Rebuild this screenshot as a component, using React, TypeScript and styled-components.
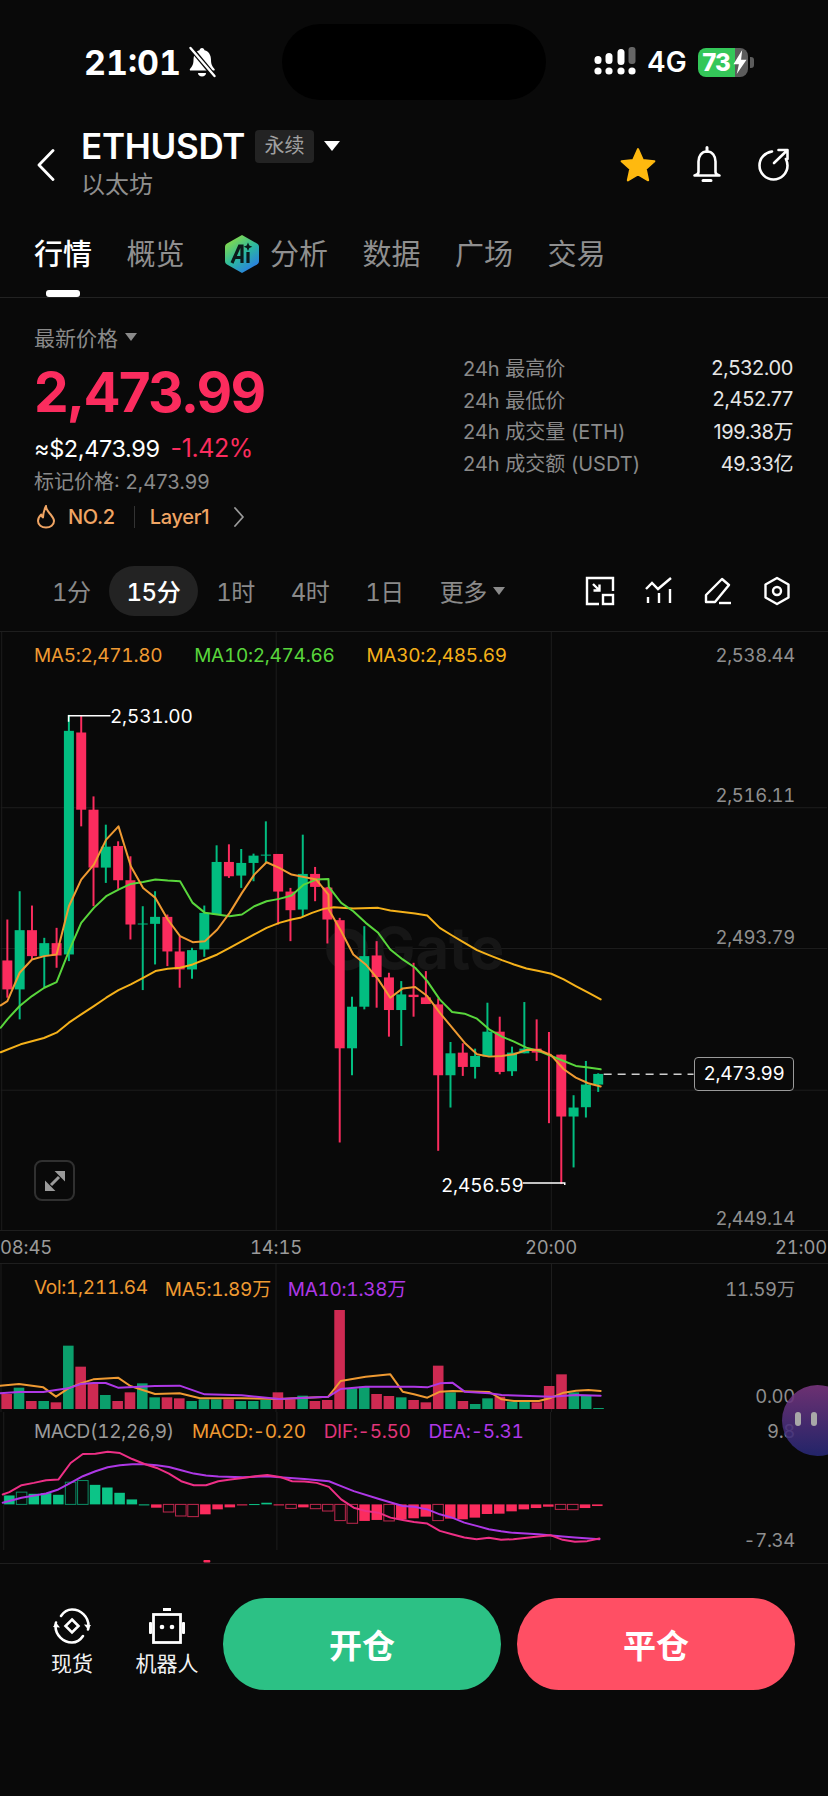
import styled, { createGlobalStyle } from "styled-components";

const GlobalStyle = createGlobalStyle`
  html, body {
    margin: 0;
    padding: 0;
    background: #090909;
  }
  * {
    box-sizing: border-box;
  }
`;

type Pt = [number, number];

const RED = "#fb2c5e";
const GREEN = "#02bd80";
const ORANGE = "#ef9a32";
const LIME = "#59d63c";
const YELLOW = "#f5b11a";
const PURPLE = "#ae38e6";
const PINK = "#ee2f86";

// values read off the reference crops: [index, up, wickTop, bodyTop, bodyBottom, wickBottom]
const candlesA: [number, number, number, number, number, number][] = [
  [0, 0, 840, 963, 1050, 1075],
  [1, 1, 755, 872, 1050, 1140],
  [2, 0, 798, 872, 950, 960],
  [3, 1, 895, 911, 950, 1045],
  [4, 0, 865, 911, 948, 985],
  [5, 1, 225, 273, 945, 965],
  [6, 0, 228, 278, 510, 560],
  [7, 0, 470, 510, 684, 800],
  [8, 1, 555, 621, 684, 730],
  [9, 0, 605, 619, 722, 748],
  [10, 0, 650, 722, 855, 900],
  [11, 1, 800, 852, 855, 1052],
  [12, 1, 755, 832, 853, 975],
  [13, 0, 825, 832, 936, 980],
  [14, 0, 890, 936, 990, 1045],
  [15, 1, 925, 932, 990, 1018],
  [16, 1, 798, 820, 930, 952],
  [17, 1, 617, 667, 825, 825],
  [18, 0, 614, 667, 710, 715],
  [19, 1, 628, 670, 708, 745],
  [20, 1, 642, 648, 670, 725],
  [21, 1, 545, 645, 648, 670],
  [22, 0, 643, 643, 756, 855],
  [23, 0, 745, 756, 812, 905],
  [24, 1, 585, 703, 810, 830],
  [25, 0, 682, 703, 742, 785],
  [26, 0, 742, 744, 840, 912],
];

const candlesB: [number, number, number, number, number, number][] = [
  [27, 0, 355, 362, 747, 1030],
  [28, 1, 592, 622, 747, 828],
  [29, 1, 380, 470, 622, 630],
  [30, 0, 425, 468, 533, 625],
  [31, 0, 520, 534, 632, 712],
  [32, 1, 545, 585, 632, 740],
  [33, 0, 490, 586, 593, 652],
  [34, 0, 515, 594, 614, 614],
  [35, 0, 597, 615, 828, 1055],
  [36, 1, 728, 762, 828, 925],
  [37, 0, 732, 760, 803, 830],
  [38, 1, 748, 770, 803, 838],
  [39, 1, 610, 697, 772, 772],
  [40, 0, 652, 697, 818, 825],
  [41, 1, 742, 760, 816, 830],
  [42, 1, 608, 748, 762, 762],
  [43, 0, 660, 748, 760, 785],
  [44, 0, 698, 772, 772, 972],
  [45, 0, 766, 766, 952, 1155],
  [46, 1, 888, 925, 952, 1105],
  [47, 1, 785, 856, 924, 955],
  [48, 1, 822, 824, 856, 878],
];

const candleX = (i: number) => 6.67 + 12.33 * i;

const candles = [
  ...candlesA.map(([i, up, a, b, c, d]) => ({
    i, up,
    wt: 640 + a / 3, bt: 640 + b / 3, bb: 640 + c / 3, wb: 640 + d / 3,
  })),
  ...candlesB.map(([i, up, a, b, c, d]) => ({
    i, up,
    wt: 800 + a / 3, bt: 800 + b / 3, bb: 800 + c / 3, wb: 800 + d / 3,
  })),
];

const fromA = (p: Pt[]) => p.map(([x, y]) => `${x / 3},${640 + y / 3}`);
const fromB = (p: Pt[]) => p.map(([x, y]) => `${300 + x / 2.97},${800 + y / 3}`);
const lowerL = (p: Pt[]) => p.map(([x, y]) => `${x / 3},${1220 + y / 3}`);
const lowerR = (p: Pt[]) => p.map(([x, y]) => `${414 + x / 3},${1220 + y / 3}`);

const ma5 = [
  ...fromA([[0,1098],[20,1085],[57,1000],[94,960],[131,950],[168,945],[205,800],[242,720],[280,675],[317,600],[354,560],[391,680],[428,745],[465,775],[502,840],[539,890],[577,908],[614,905],[651,870],[688,820],[725,760],[762,705],[799,668],[837,685],[874,705],[911,712],[948,720],[985,765]]),
  ...fromB([[85,330],[122,395],[158,465],[195,495],[232,540],[268,595],[305,567],[342,563],[378,590],[415,640],[452,685],[489,730],[526,765],[562,772],[600,770],[636,765],[673,752],[710,752],[747,768],[784,810],[820,835],[857,852],[894,862]]),
].join(" ");

const ma10 = [
  ...fromA([[0,1165],[20,1140],[57,1100],[94,1070],[131,1045],[168,1028],[205,935],[242,850],[280,805],[317,770],[354,750],[391,733],[428,727],[465,720],[502,723],[539,725],[577,790],[614,820],[651,825],[688,830],[725,825],[762,800],[799,785],[837,778],[874,768],[911,735],[948,720],[985,718]]),
  ...fromB([[85,262],[122,310],[158,335],[195,370],[232,400],[268,450],[305,480],[342,505],[378,545],[415,600],[452,638],[489,643],[526,658],[562,690],[600,712],[636,727],[673,745],[710,755],[747,770],[784,785],[820,800],[857,805],[894,810]]),
].join(" ");

const ma30 = [
  "0,1053", "20,1045",
  ...fromA([[130,1196],[168,1180],[205,1150],[242,1125],[280,1100],[317,1075],[354,1052],[391,1035],[428,1015],[465,995],[502,988],[539,985],[577,975],[614,960],[651,945],[688,925],[725,905],[762,885],[799,865],[837,850],[874,840]]),
  ...fromB([[0,355],[35,340],[70,328],[100,323],[158,327],[232,325],[268,333],[342,342],[378,348],[415,385],[452,408],[489,430],[526,452],[562,467],[600,482],[636,495],[673,507],[710,515],[747,523],[784,540],[820,560],[857,580],[894,600]]),
].join(" ");

// [top, up]
const volumes: [number, number][] = [
  [522,0],[503,1],[543,0],[543,1],[547,0],[377,1],[440,0],[490,0],[525,1],[543,0],
  [517,0],[490,1],[532,1],[532,0],[535,0],[543,1],[538,1],[538,1],[538,0],[543,1],
  [543,1],[540,1],[517,0],[538,0],[527,1],[543,0],[540,0],[270,0],[505,1],[500,1],
  [522,0],[528,0],[532,1],[540,0],[547,0],[437,0],[517,1],[543,0],[552,1],[535,1],
  [530,0],[545,1],[545,1],[547,0],[498,0],[463,0],[517,1],[528,1],[564,1],
];

const volMa5 = [
  ...lowerL([[0,497],[57,492],[130,502],[168,530],[205,505],[242,490],[280,478],[354,473],[391,498],[428,510],[465,522],[539,520],[600,535],[725,535],[837,537],[985,530],[1022,483],[1097,470],[1171,463],[1208,515]]),
  ...lowerR([[0,523],[40,533],[78,515],[115,513],[226,516],[263,538],[300,543],[375,543],[412,533],[449,518],[486,512],[523,510],[560,513]]),
].join(" ");

const volMa10 = [
  ...lowerL([[0,520],[57,516],[130,516],[168,510],[205,505],[242,492],[280,489],[317,489],[354,503],[465,498],[539,497],[614,523],[725,526],[837,537],[985,530],[1022,507],[1097,500]]),
  ...lowerR([[0,500],[40,502],[78,490],[115,488],[152,515],[226,520],[263,525],[412,530],[486,525],[560,527]]),
].join(" ");

// [end, up, hollow]
const macdBars: [number, number, number][] = [
  [828,1,0],[818,1,1],[823,1,0],[821,1,0],[826,1,0],[788,1,1],[783,1,1],[796,1,0],[804,1,0],[820,1,0],
  [840,1,0],[855,1,0],[865,0,0],[878,0,1],[890,0,1],[892,0,1],[885,0,0],[870,0,0],[864,0,0],[858,0,0],
  [854,1,0],[850,1,0],[858,0,0],[867,0,1],[864,0,0],[868,0,1],[875,0,1],[904,0,1],[912,0,1],[905,0,0],
  [902,0,0],[905,0,1],[900,0,0],[897,0,0],[892,0,0],[904,0,1],[898,0,0],[900,0,0],[895,0,0],[884,0,0],
  [883,0,0],[876,0,0],[870,0,0],[866,0,0],[862,0,0],[870,0,1],[871,0,1],[866,0,0],[860,0,0],
];

const dif = [
  ...lowerL([[0,825],[20,818],[57,797],[94,790],[131,782],[168,780],[205,730],[242,703],[280,702],[317,696],[354,700],[391,718],[428,733],[465,745],[502,762],[539,785],[577,797],[614,797],[651,785],[688,780],[725,775],[762,770],[799,766],[837,772],[874,785],[911,786],[948,790],[985,802],[1022,840],[1060,865],[1097,875],[1134,880],[1171,895],[1208,902]]),
  ...lowerR([[0,908],[40,913],[78,935],[115,945],[152,955],[189,960],[226,956],[263,962],[300,960],[375,952],[412,948],[449,962],[486,968],[523,966],[560,958]]),
].join(" ");

const dea = [
  ...lowerL([[0,850],[57,835],[131,822],[168,810],[205,790],[242,770],[280,755],[317,743],[354,737],[391,734],[428,734],[465,737],[502,742],[539,752],[577,762],[614,768],[651,771],[725,773],[799,770],[837,773],[911,778],[985,785],[1022,800],[1060,815],[1134,838],[1208,860]]),
  ...lowerR([[0,862],[40,870],[78,885],[115,895],[152,910],[189,920],[226,930],[263,936],[300,941],[375,945],[449,952],[486,955],[560,960]]),
].join(" ");

const stats = [
  { label: "24h 最高价", value: "2,532.00" },
  { label: "24h 最低价", value: "2,452.77" },
  { label: "24h 成交量 (ETH)", value: "199.38万" },
  { label: "24h 成交额 (USDT)", value: "49.33亿" },
];

const intervals = ["1分", "15分", "1时", "4时", "1日"];

const BellOffIcon = () => (
  <svg width="32" height="32" viewBox="0 0 32 32">
    <path d="M16 2c1.500 0 2.300 1 2.500 2.300 4.500 1.200 6.500 5 6.500 9.700 0 4.500 1.500 6.500 3.500 9 .6.800.2 1.500-.8 1.500H4.800c-1 0-1.400-.7-.8-1.500 2-2.500 3.500-4.500 3.500-9 0-4.700 2-8.500 6-9.700.2-1.300 1-2.300 2.500-2.300z" fill="#fff" />
    <path d="M12 27h8c0 2-1.800 3.500-4 3.500s-4-1.500-4-3.500z" fill="#fff" />
    <path d="M4 1l25 30" stroke="#090909" strokeWidth="5" />
    <path d="M4.500 2l24 28" stroke="#fff" strokeWidth="2.400" strokeLinecap="round" />
  </svg>
);

const SignalIcon = () => (
  <svg width="44" height="30" viewBox="0 0 44 30">
    <circle cx="5" cy="24" r="3.600" fill="#fff" />
    <circle cx="16" cy="24" r="3.600" fill="#fff" />
    <circle cx="28" cy="24" r="3.600" fill="#fff" />
    <circle cx="39" cy="24" r="3.600" fill="#fff" />
    <rect x="1.500" y="9" width="7" height="8" rx="3.500" fill="#fff" />
    <rect x="12.500" y="6" width="7" height="11" rx="3.500" fill="#fff" />
    <rect x="24.500" y="2" width="7" height="16" rx="3.500" fill="#fff" />
    <rect x="35.500" y="0" width="7" height="17" rx="3" fill="#666" />
  </svg>
);

const BackIcon = () => (
  <svg width="20" height="32" viewBox="0 0 20 32">
    <path d="M17 1.500 3 16l14 14.500" fill="none" stroke="#fff" strokeWidth="2.800" strokeLinecap="round" strokeLinejoin="round" />
  </svg>
);

const StarIcon = () => (
  <svg width="38" height="38" viewBox="0 0 36 36">
    <path d="M18 3l4.500 10.200 11 1.200-8.200 7.300 2.300 10.800L18 26.900 8.400 32.500l2.300-10.800-8.200-7.300 11-1.200z" fill="#ffb90f" stroke="#ffb90f" strokeWidth="2" strokeLinejoin="round" />
  </svg>
);

const BellIcon = () => (
  <svg width="32" height="38" viewBox="0 0 32 38">
    <path d="M16 5.500c-5.500 0-8.500 4.500-8.500 10V26c0 1.500-1.500 3-4 3.500h25c-2.500-.5-4-2-4-3.500V15.500c0-5.500-3-10-8.500-10z" fill="none" stroke="#fff" strokeWidth="2.600" strokeLinejoin="round" />
    <path d="M16 1.500v4M12 34.500h8" stroke="#fff" strokeWidth="3" strokeLinecap="round" />
  </svg>
);

const ShareIcon = () => (
  <svg width="34" height="34" viewBox="0 0 34 34">
    <path d="M15 3.500C8 4.500 2.500 10 2.500 17.500c0 7.700 6.300 14 14 14s14-6.300 14-14c0-2.500-.6-4.500-1.600-6.500" fill="none" stroke="#fff" strokeWidth="2.600" strokeLinecap="round" />
    <path d="M17 15 30 2.500M21.500 2h9v9" fill="none" stroke="#fff" strokeWidth="2.600" strokeLinecap="round" strokeLinejoin="round" />
  </svg>
);

const AiIcon = () => (
  <svg width="36" height="40" viewBox="0 0 36 40">
    <defs>
      <linearGradient id="aiHex" x1="0.150" y1="0.100" x2="0.750" y2="1">
        <stop offset="0" stopColor="#86d94a" />
        <stop offset="0.500" stopColor="#2bb9a0" />
        <stop offset="1" stopColor="#2a78ea" />
      </linearGradient>
    </defs>
    <path d="M18 1l15 8.500c1.500.9 2 2 2 3.500v14c0 1.500-.5 2.600-2 3.500L18 39 3 30.500c-1.500-.9-2-2-2-3.500V13c0-1.500.5-2.600 2-3.500z" fill="url(#aiHex)" />
    <path d="M8 29l7.500-17h2.500v17M11.500 23.500H18M24 18v11" fill="none" stroke="#0b1a1a" strokeWidth="3.200" />
    <path d="M24 8.500l1.300 3 3 1.300-3 1.300-1.300 3-1.300-3-3-1.300 3-1.300z" fill="#0b1a1a" />
  </svg>
);

const FlameIcon = () => (
  <svg width="20" height="24" viewBox="0 0 20 24">
    <path d="M10 1.500c.5 4 2.500 5.500 5 8.500 1.800 2.200 3 4 3 6 0 3.900-3.600 6.500-8 6.500s-8-2.600-8-6.500c0-3 1.600-5 3.200-6.500.3 1.500.9 2.400 1.800 3 .2-4 1.300-8 3-11.500z" fill="none" stroke="#f0a564" strokeWidth="2" strokeLinejoin="round" />
  </svg>
);

const SmallChevron = () => (
  <svg width="12" height="22" viewBox="0 0 12 22">
    <path d="M2 2l8 9-8 9" fill="none" stroke="#9a9a9a" strokeWidth="1.800" strokeLinecap="round" strokeLinejoin="round" />
  </svg>
);

const LayoutIcon = () => (
  <svg width="30" height="30" viewBox="0 0 30 30" fill="none" stroke="#fff" strokeWidth="2.400">
    <path d="M28 15V2H2v26h12" />
    <rect x="18" y="19" width="10" height="9" />
    <path d="M8 8l6 6M14.500 8.500v6h-6" />
  </svg>
);

const IndicatorIcon = () => (
  <svg width="30" height="30" viewBox="0 0 30 30" fill="none" stroke="#fff" strokeWidth="2.400">
    <path d="M2 13l6-6 6 6L27 2" />
    <path d="M4 27v-6M15 27V17M26 27V13" />
  </svg>
);

const PenIcon = () => (
  <svg width="30" height="30" viewBox="0 0 30 30" fill="none" stroke="#fff" strokeWidth="2.400" strokeLinejoin="round">
    <path d="M19 3l7 6-14 17H3v-7z" />
    <path d="M16 27h12" />
  </svg>
);

const HexIcon = () => (
  <svg width="30" height="30" viewBox="0 0 30 30" fill="none" stroke="#fff" strokeWidth="2.400" strokeLinejoin="round">
    <path d="M15 2l11.500 6.500v13L15 28 3.500 21.500v-13z" />
    <circle cx="15" cy="15" r="4" />
  </svg>
);

const ExpandIcon = () => (
  <svg width="24" height="24" viewBox="0 0 24 24" fill="#9a9a9a" stroke="#9a9a9a" strokeWidth="2">
    <path d="M14 3h7v7zM3 21v-7l7 7z" />
    <path d="M16 8l-8 8" strokeWidth="3" />
  </svg>
);

const SpotIcon = () => (
  <svg width="38" height="38" viewBox="0 0 38 38" fill="none" stroke="#fff" strokeWidth="2.600">
    <path d="M8 9C11 4.500 15 2.500 19 2.500c9 0 16.500 7.500 16.500 16.500 0 1.500-.2 2.500-.5 3.500M30 29c-3 4.500-7 6.500-11 6.500C10 35.500 2.500 28 2.500 19c0-1.500.2-2.500.5-3.500" strokeLinecap="round" />
    <path d="M31 17.500l4 5 3-4.500zM7 20.500l-4-5-3 4.500z" fill="#fff" stroke="none" />
    <path d="M19 12.500l6.500 6.500-6.500 6.500-6.500-6.500z" />
  </svg>
);

const RobotIcon = () => (
  <svg width="38" height="38" viewBox="0 0 38 38" fill="none">
    <rect x="15" y="1" width="8" height="3" fill="#fff" />
    <rect x="5.500" y="7.500" width="27" height="28" stroke="#fff" strokeWidth="2.800" />
    <rect x="1" y="15" width="3" height="12" rx="1" fill="#fff" />
    <rect x="34" y="15" width="3" height="12" rx="1" fill="#fff" />
    <circle cx="14" cy="20" r="2.300" fill="#fff" />
    <circle cx="24" cy="20" r="2.300" fill="#fff" />
  </svg>
);

export default function App() {
  return (
    <Page>
      <GlobalStyle />
      <StatusBar>
        <StatusLeft>
          <Clock>21:01</Clock>
          <BellOffIcon />
        </StatusLeft>
        <Island />
        <StatusRight>
          <SignalIcon />
          <Network>4G</Network>
          <Battery>
            <BatteryLevel>73</BatteryLevel>
            <BatteryRest>
              <svg width="16" height="24" viewBox="0 0 14 22">
                <path d="M9 0 1 13h5l-2 9 9-13H8z" fill="#fff" />
              </svg>
            </BatteryRest>
          </Battery>
          <BatteryNub />
        </StatusRight>
      </StatusBar>

      <NavRow>
        <BackButton>
          <BackIcon />
        </BackButton>
        <TitleBlock>
          <TitleLine>
            <Symbol>ETHUSDT</Symbol>
            <Tag>永续</Tag>
            <Caret $size={8} $color="#fff" />
          </TitleLine>
          <Subtitle>以太坊</Subtitle>
        </TitleBlock>
        <NavActions>
          <StarIcon />
          <BellIcon />
          <ShareIcon />
        </NavActions>
      </NavRow>

      <Tabs>
        <Tab $active>行情</Tab>
        <Tab>概览</Tab>
        <Tab>
          <AiIcon />
          分析
        </Tab>
        <Tab>数据</Tab>
        <Tab>广场</Tab>
        <Tab>交易</Tab>
      </Tabs>

      <Summary>
        <PriceColumn>
          <PriceKind>
            最新价格
            <Caret $size={6} $color="#8a8a8a" />
          </PriceKind>
          <LastPrice>2,473.99</LastPrice>
          <Converted>
            ≈$2,473.99<Change>-1.42%</Change>
          </Converted>
          <MarkPrice>标记价格: 2,473.99</MarkPrice>
          <Badges>
            <FlameIcon />
            <BadgeText>NO.2</BadgeText>
            <BadgeDivider />
            <BadgeText>Layer1</BadgeText>
            <SmallChevron />
          </Badges>
        </PriceColumn>
        <StatsColumn>
          {stats.map((s) => (
            <StatRow key={s.label}>
              <StatLabel>{s.label}</StatLabel>
              <StatValue>{s.value}</StatValue>
            </StatRow>
          ))}
        </StatsColumn>
      </Summary>

      <Toolbar>
        {intervals.map((t) => (
          <Interval key={t} $active={t === "15分"}>
            {t}
          </Interval>
        ))}
        <Interval>
          更多
          <Caret $size={6} $color="#8a8a8a" />
        </Interval>
        <ToolIcons>
          <LayoutIcon />
          <IndicatorIcon />
          <PenIcon />
          <HexIcon />
        </ToolIcons>
      </Toolbar>

      <PricePanel>
        <PlotSvg viewBox="0 632 828 599">
          <GridLine x1="0" x2="828" y1="808" y2="808" />
          <GridLine x1="0" x2="828" y1="949" y2="949" />
          <GridLine x1="0" x2="828" y1="1091" y2="1091" />
          <GridLine x1="1" x2="1" y1="632" y2="1231" />
          <GridLine x1="276" x2="276" y1="632" y2="1231" />
          <GridLine x1="551.500" x2="551.500" y1="632" y2="1231" />
          <circle cx="347" cy="950" r="16" fill="none" stroke="#161616" strokeWidth="10" />
          <Watermark x="372" y="970">Gate</Watermark>
          {candles.map((c) => {
            const color = c.up ? GREEN : RED;
            const x = candleX(c.i);
            return (
              <g key={c.i}>
                <line x1={x} x2={x} y1={c.wt} y2={c.wb} stroke={color} strokeWidth="2" />
                {c.bb > c.bt && (
                  <rect x={x - 5} y={c.bt} width="10" height={c.bb - c.bt} fill={color} />
                )}
              </g>
            );
          })}
          <MaLine points={ma30} stroke={YELLOW} />
          <MaLine points={ma10} stroke={LIME} />
          <MaLine points={ma5} stroke={ORANGE} />
          <path d="M68 722v-6h42M523 1184h42v2" fill="none" stroke="#fff" strokeWidth="1.500" />
          <line x1="604" x2="694" y1="1075" y2="1075" stroke="#cfcfcf" strokeWidth="1.500" strokeDasharray="8 6" />
        </PlotSvg>
        <Legend $height={46} $gap={32}>
          <LegendItem $color={ORANGE}>MA5:2,471.80</LegendItem>
          <LegendItem $color={LIME}>MA10:2,474.66</LegendItem>
          <LegendItem $color={YELLOW}>MA30:2,485.69</LegendItem>
        </Legend>
        <AxisValue $y={23}>2,538.44</AxisValue>
        <AxisValue $y={163}>2,516.11</AxisValue>
        <AxisValue $y={305}>2,493.79</AxisValue>
        <AxisValue $y={586}>2,449.14</AxisValue>
        <PriceNote $x={110} $y={84}>2,531.00</PriceNote>
        <PriceNote $x={441} $y={553}>2,456.59</PriceNote>
        <CurrentPrice>2,473.99</CurrentPrice>
        <ExpandButton>
          <ExpandIcon />
        </ExpandButton>
      </PricePanel>

      <TimeAxis>
        <TimeTick $x={26}>08:45</TimeTick>
        <TimeTick $x={276}>14:15</TimeTick>
        <TimeTick $x={551}>20:00</TimeTick>
        <TimeTick $x={801}>21:00</TimeTick>
      </TimeAxis>

      <VolumePanel>
        <PlotSvg viewBox="0 1264 828 148">
          <GridLine x1="1" x2="1" y1="1264" y2="1412" />
          <GridLine x1="276" x2="276" y1="1264" y2="1412" />
          <GridLine x1="551.500" x2="551.500" y1="1264" y2="1412" />
          {volumes.map(([top, up], i) => {
            const y = 1220 + top / 3;
            return (
              <rect
                key={i}
                x={candleX(i) - 5.300}
                y={y}
                width="10.600"
                height={1409 - y}
                fill={up ? "#0b9f6c" : "#ce2a52"}
              />
            );
          })}
          <MaLine points={volMa5} stroke={ORANGE} />
          <MaLine points={volMa10} stroke={PURPLE} />
        </PlotSvg>
        <Legend $height={46} $gap={17}>
          <LegendItem $color={ORANGE}>Vol:1,211.64</LegendItem>
          <LegendItem $color={ORANGE}>MA5:1.89万</LegendItem>
          <LegendItem $color={PURPLE}>MA10:1.38万</LegendItem>
        </Legend>
        <AxisValue $y={24}>11.59万</AxisValue>
        <AxisValue $y={132}>0.00</AxisValue>
      </VolumePanel>

      <MacdPanel>
        <PlotSvg viewBox="0 1412 828 152">
          <GridLine x1="1" x2="1" y1="1412" y2="1551" />
          <GridLine x1="276" x2="276" y1="1412" y2="1551" />
          <GridLine x1="551.500" x2="551.500" y1="1412" y2="1551" />
          {macdBars.map(([end, up, hollow], i) => {
            const zero = 1505;
            const y = 1220 + end / 3;
            const top = Math.min(y, zero);
            const h = Math.max(Math.abs(y - zero), 1);
            const color = up ? "#0cc487" : RED;
            return (
              <rect
                key={i}
                x={candleX(i) - 5.300}
                y={top}
                width="10.600"
                height={h}
                fill={hollow ? "none" : color}
                stroke={hollow ? (up ? "#0c8d66" : "#c0284f") : "none"}
                strokeWidth="1"
              />
            );
          })}
          <MaLine points={dea} stroke={PURPLE} />
          <MaLine points={dif} stroke={PINK} />
          <rect x="202" y="1561" width="7" height="2.500" rx="1" fill={RED} />
        </PlotSvg>
        <Legend $height={38} $gap={18}>
          <LegendItem $color="#9a9a9a">MACD(12,26,9)</LegendItem>
          <LegendItem $color={ORANGE}>MACD:-0.20</LegendItem>
          <LegendItem $color="#e0357a">DIF:-5.50</LegendItem>
          <LegendItem $color={PURPLE}>DEA:-5.31</LegendItem>
        </Legend>
        <AxisValue $y={19}>9.8</AxisValue>
        <AxisValue $y={128}>-7.34</AxisValue>
      </MacdPanel>

      <BottomBar>
        <SideAction>
          <SpotIcon />
          <SideLabel>现货</SideLabel>
        </SideAction>
        <SideAction>
          <RobotIcon />
          <SideLabel>机器人</SideLabel>
        </SideAction>
        <TradeButton $color="#2cc185" $shift={-1}>开仓</TradeButton>
        <TradeButton $color="#ff4f64" $shift={-3}>平仓</TradeButton>
      </BottomBar>

      <FloatingBubble>
        <BubbleEye />
        <BubbleEye />
      </FloatingBubble>
    </Page>
  );
}

const sans = `Inter, "Noto Sans CJK SC", sans-serif`;

const Page = styled.div`
  position: relative;
  width: 828px;
  height: 1796px;
  overflow: hidden;
  background: #090909;
  color: #fff;
  font-family: ${sans};
`;

const StatusBar = styled.div`
  display: grid;
  grid-template-columns: 282px 264px 1fr;
  height: 124px;
  padding-top: 24px;
`;

const StatusLeft = styled.div`
  display: flex;
  align-items: center;
  gap: 5px;
  height: 76px;
  padding-left: 84px;
`;

const Clock = styled.span`
  font-size: 34px;
  font-weight: 700;
  font-variant-numeric: tabular-nums;
`;

const Island = styled.div`
  height: 76px;
  background: #000;
  border-radius: 38px;
`;

const StatusRight = styled.div`
  display: flex;
  align-items: center;
  height: 76px;
  padding-left: 47px;
  gap: 10px;
`;

const Network = styled.span`
  font-size: 28px;
  font-weight: 600;
`;

const Battery = styled.div`
  display: flex;
  width: 50px;
  height: 29px;
  margin-left: 1px;
  border-radius: 8px;
  overflow: hidden;
`;

const BatteryLevel = styled.div`
  width: 38px;
  background: #34c759;
  font-size: 24px;
  font-weight: 800;
  line-height: 29px;
  text-align: center;
  letter-spacing: -0.8px;
`;

const BatteryRest = styled.div`
  flex: 1;
  display: flex;
  align-items: center;
  background: #5c5c5c;
  svg {
    margin-left: -3px;
  }
`;

const BatteryNub = styled.div`
  width: 4px;
  height: 11px;
  margin-left: -8px;
  background: #5c5c5c;
  border-radius: 0 3px 3px 0;
`;

const NavRow = styled.div`
  display: flex;
  align-items: center;
  height: 78px;
  padding-left: 36px;
  padding-right: 37px;
`;

const BackButton = styled.div`
  display: flex;
  width: 45px;
  margin-top: 4px;
`;

const TitleBlock = styled.div`
  display: flex;
  flex-direction: column;
  gap: 4px;
`;

const TitleLine = styled.div`
  display: flex;
  align-items: center;
  height: 40px;
`;

const Symbol = styled.span`
  font-size: 35px;
  font-weight: 600;
  letter-spacing: -0.3px;
`;

const Tag = styled.span`
  width: 59px;
  height: 33px;
  margin-left: 10px;
  margin-right: 10px;
  background: #232323;
  border-radius: 4px;
  color: #a0a0a0;
  font-size: 20px;
  line-height: 33px;
  text-align: center;
`;

const Caret = styled.i<{ $size: number; $color: string }>`
  display: inline-block;
  width: 0;
  height: 0;
  border-left: ${(p) => p.$size}px solid transparent;
  border-right: ${(p) => p.$size}px solid transparent;
  border-top: ${(p) => p.$size + 2}px solid ${(p) => p.$color};
`;

const Subtitle = styled.span`
  color: #8f8f8f;
  font-size: 24px;
  line-height: 30px;
`;

const NavActions = styled.div`
  display: flex;
  align-items: center;
  gap: 34px;
  margin-left: auto;
  margin-top: 4px;
`;

const Tabs = styled.div`
  display: flex;
  gap: 34.500px;
  height: 96px;
  padding: 36px 0 0 34px;
  border-bottom: 1px solid #222;
`;

const Tab = styled.div<{ $active?: boolean }>`
  position: relative;
  display: flex;
  align-items: flex-start;
  gap: 10px;
  height: 59px;
  color: ${(p) => (p.$active ? "#fff" : "#8f8f8f")};
  font-size: 29px;
  line-height: 34px;
  font-weight: ${(p) => (p.$active ? 500 : 400)};
  svg {
    margin-top: -4px;
    margin-left: 5px;
  }
  &::after {
    content: "";
    display: ${(p) => (p.$active ? "block" : "none")};
    position: absolute;
    left: 12px;
    bottom: 0;
    width: 34px;
    height: 7px;
    border-radius: 3px;
    background: #fff;
  }
`;

const Summary = styled.div`
  display: flex;
  justify-content: space-between;
  height: 268px;
  padding: 0 35px 0 34px;
`;

const PriceColumn = styled.div`
  display: flex;
  flex-direction: column;
  padding-top: 25px;
`;

const PriceKind = styled.div`
  display: flex;
  align-items: center;
  gap: 7px;
  height: 28px;
  color: #8a8a8a;
  font-size: 21px;
`;

const LastPrice = styled.div`
  margin-top: 11px;
  color: ${RED};
  font-size: 55px;
  font-weight: 700;
  line-height: 60px;
  letter-spacing: -1.800px;
`;

const Converted = styled.div`
  margin-top: 10px;
  font-size: 23.500px;
  line-height: 32px;
  letter-spacing: -0.4px;
`;

const Change = styled.span`
  margin-left: 11px;
  color: ${RED};
  font-size: 25px;
`;

const MarkPrice = styled.div`
  margin-top: 3px;
  color: #8a8a8a;
  font-size: 20px;
  line-height: 28px;
`;

const Badges = styled.div`
  display: flex;
  align-items: center;
  height: 30px;
  margin-top: 6px;
  padding-left: 2px;
`;

const BadgeText = styled.span`
  color: #f0a564;
  font-size: 20px;
  font-weight: 500;
  margin-left: 12px;
  letter-spacing: -0.3px;
  &:last-of-type {
    margin-right: 24px;
    margin-left: 15px;
  }
`;

const BadgeDivider = styled.span`
  width: 1px;
  height: 22px;
  margin-left: 19px;
  background: #333;
`;

const StatsColumn = styled.div`
  display: flex;
  flex-direction: column;
  width: 330px;
  padding-top: 54px;
`;

const StatRow = styled.div`
  display: flex;
  align-items: center;
  justify-content: space-between;
  height: 31.500px;
  font-size: 20px;
`;

const StatLabel = styled.span`
  color: #8a8a8a;
`;

const StatValue = styled.span`
  color: #e6e6e6;
  letter-spacing: -0.4px;
`;

const Toolbar = styled.div`
  display: flex;
  align-items: center;
  height: 66px;
  padding: 0 36px 16px 34px;
  border-bottom: 1px solid #1e1e1e;
`;

const Interval = styled.div<{ $active?: boolean }>`
  display: flex;
  align-items: center;
  gap: 6px;
  height: 50px;
  padding: 0 18px;
  border-radius: 25px;
  background: ${(p) => (p.$active ? "#232323" : "transparent")};
  color: ${(p) => (p.$active ? "#fff" : "#8a8a8a")};
  font-size: 24px;
  letter-spacing: -0.5px;
  font-variant-numeric: tabular-nums;
  font-weight: ${(p) => (p.$active ? 500 : 400)};
`;

const ToolIcons = styled.div`
  display: flex;
  align-items: center;
  gap: 29px;
  margin-left: auto;
`;

const PricePanel = styled.div`
  position: relative;
  height: 599px;
  border-bottom: 1px solid #1e1e1e;
`;

const PlotSvg = styled.svg`
  position: absolute;
  inset: 0;
  width: 100%;
  height: 100%;
`;

const GridLine = styled.line`
  stroke: #1d1d1d;
  stroke-width: 1;
`;

const Watermark = styled.text`
  fill: #161616;
  font-family: Inter, sans-serif;
  font-size: 58px;
  font-weight: 700;
`;

const MaLine = styled.polyline`
  fill: none;
  stroke-width: 2;
  stroke-linejoin: round;
  stroke-linecap: round;
`;

const Legend = styled.div<{ $height: number; $gap: number }>`
  position: relative;
  display: flex;
  align-items: center;
  gap: ${(p) => p.$gap}px;
  height: ${(p) => p.$height}px;
  padding-left: 34px;
`;

const LegendItem = styled.span<{ $color: string }>`
  color: ${(p) => p.$color};
  font-size: 19px;
  letter-spacing: -0.3px;
  font-variant-numeric: tabular-nums;
`;

const AxisValue = styled.span<{ $y: number }>`
  position: absolute;
  right: 33px;
  top: ${(p) => p.$y}px;
  transform: translateY(-50%);
  color: #8f8f8f;
  font-size: 18.500px;
  letter-spacing: -0.3px;
  font-variant-numeric: tabular-nums;
`;

const PriceNote = styled.span<{ $x: number; $y: number }>`
  position: absolute;
  left: ${(p) => p.$x}px;
  top: ${(p) => p.$y}px;
  transform: translateY(-50%);
  color: #fff;
  font-size: 19px;
  letter-spacing: -0.2px;
  font-variant-numeric: tabular-nums;
`;

const CurrentPrice = styled.div`
  position: absolute;
  left: 694px;
  top: 425px;
  width: 100px;
  height: 34px;
  border: 1px solid #9a9a9a;
  border-radius: 4px;
  background: #090909;
  font-size: 19px;
  letter-spacing: -0.4px;
  line-height: 32px;
  text-align: center;
  font-variant-numeric: tabular-nums;
`;

const ExpandButton = styled.div`
  position: absolute;
  left: 34px;
  top: 528px;
  display: flex;
  align-items: center;
  justify-content: center;
  width: 41px;
  height: 41px;
  border: 2px solid #303030;
  border-radius: 8px;
`;

const TimeAxis = styled.div`
  position: relative;
  height: 33px;
  border-bottom: 1px solid #1e1e1e;
`;

const TimeTick = styled.span<{ $x: number }>`
  position: absolute;
  left: ${(p) => p.$x}px;
  top: 50%;
  transform: translate(-50%, -50%);
  color: #9a9a9a;
  font-size: 18.500px;
  letter-spacing: -0.2px;
  font-variant-numeric: tabular-nums;
`;

const VolumePanel = styled.div`
  position: relative;
  height: 148px;
`;

const MacdPanel = styled.div`
  position: relative;
  height: 152px;
  border-bottom: 1px solid #1e1e1e;
`;

const BottomBar = styled.div`
  display: flex;
  align-items: flex-start;
  gap: 19px;
  padding: 34px 0 0 34px;
`;

const SideAction = styled.div`
  display: flex;
  flex-direction: column;
  align-items: center;
  gap: 5px;
  width: 76px;
  margin-top: 9px;
`;

const SideLabel = styled.span`
  color: #f2f2f2;
  font-size: 21px;
  line-height: 28px;
  white-space: nowrap;
`;

const TradeButton = styled.div<{ $color: string; $shift: number }>`
  display: flex;
  flex-shrink: 0;
  align-items: center;
  justify-content: center;
  width: 278px;
  height: 92px;
  margin-left: ${(p) => p.$shift}px;
  border-radius: 42px / 46px;
  background: ${(p) => p.$color};
  font-size: 33px;
  font-weight: 700;
`;

const FloatingBubble = styled.div`
  position: absolute;
  left: 782px;
  top: 1385px;
  display: flex;
  align-items: center;
  gap: 10px;
  width: 71px;
  height: 71px;
  padding-left: 13px;
  padding-bottom: 4px;
  border-radius: 50%;
  background: linear-gradient(180deg, rgba(122, 54, 128, 0.88), rgba(38, 40, 118, 0.88));
`;

const BubbleEye = styled.span`
  width: 6px;
  height: 14px;
  border-radius: 3px;
  background: #a8a8a8;
`;
